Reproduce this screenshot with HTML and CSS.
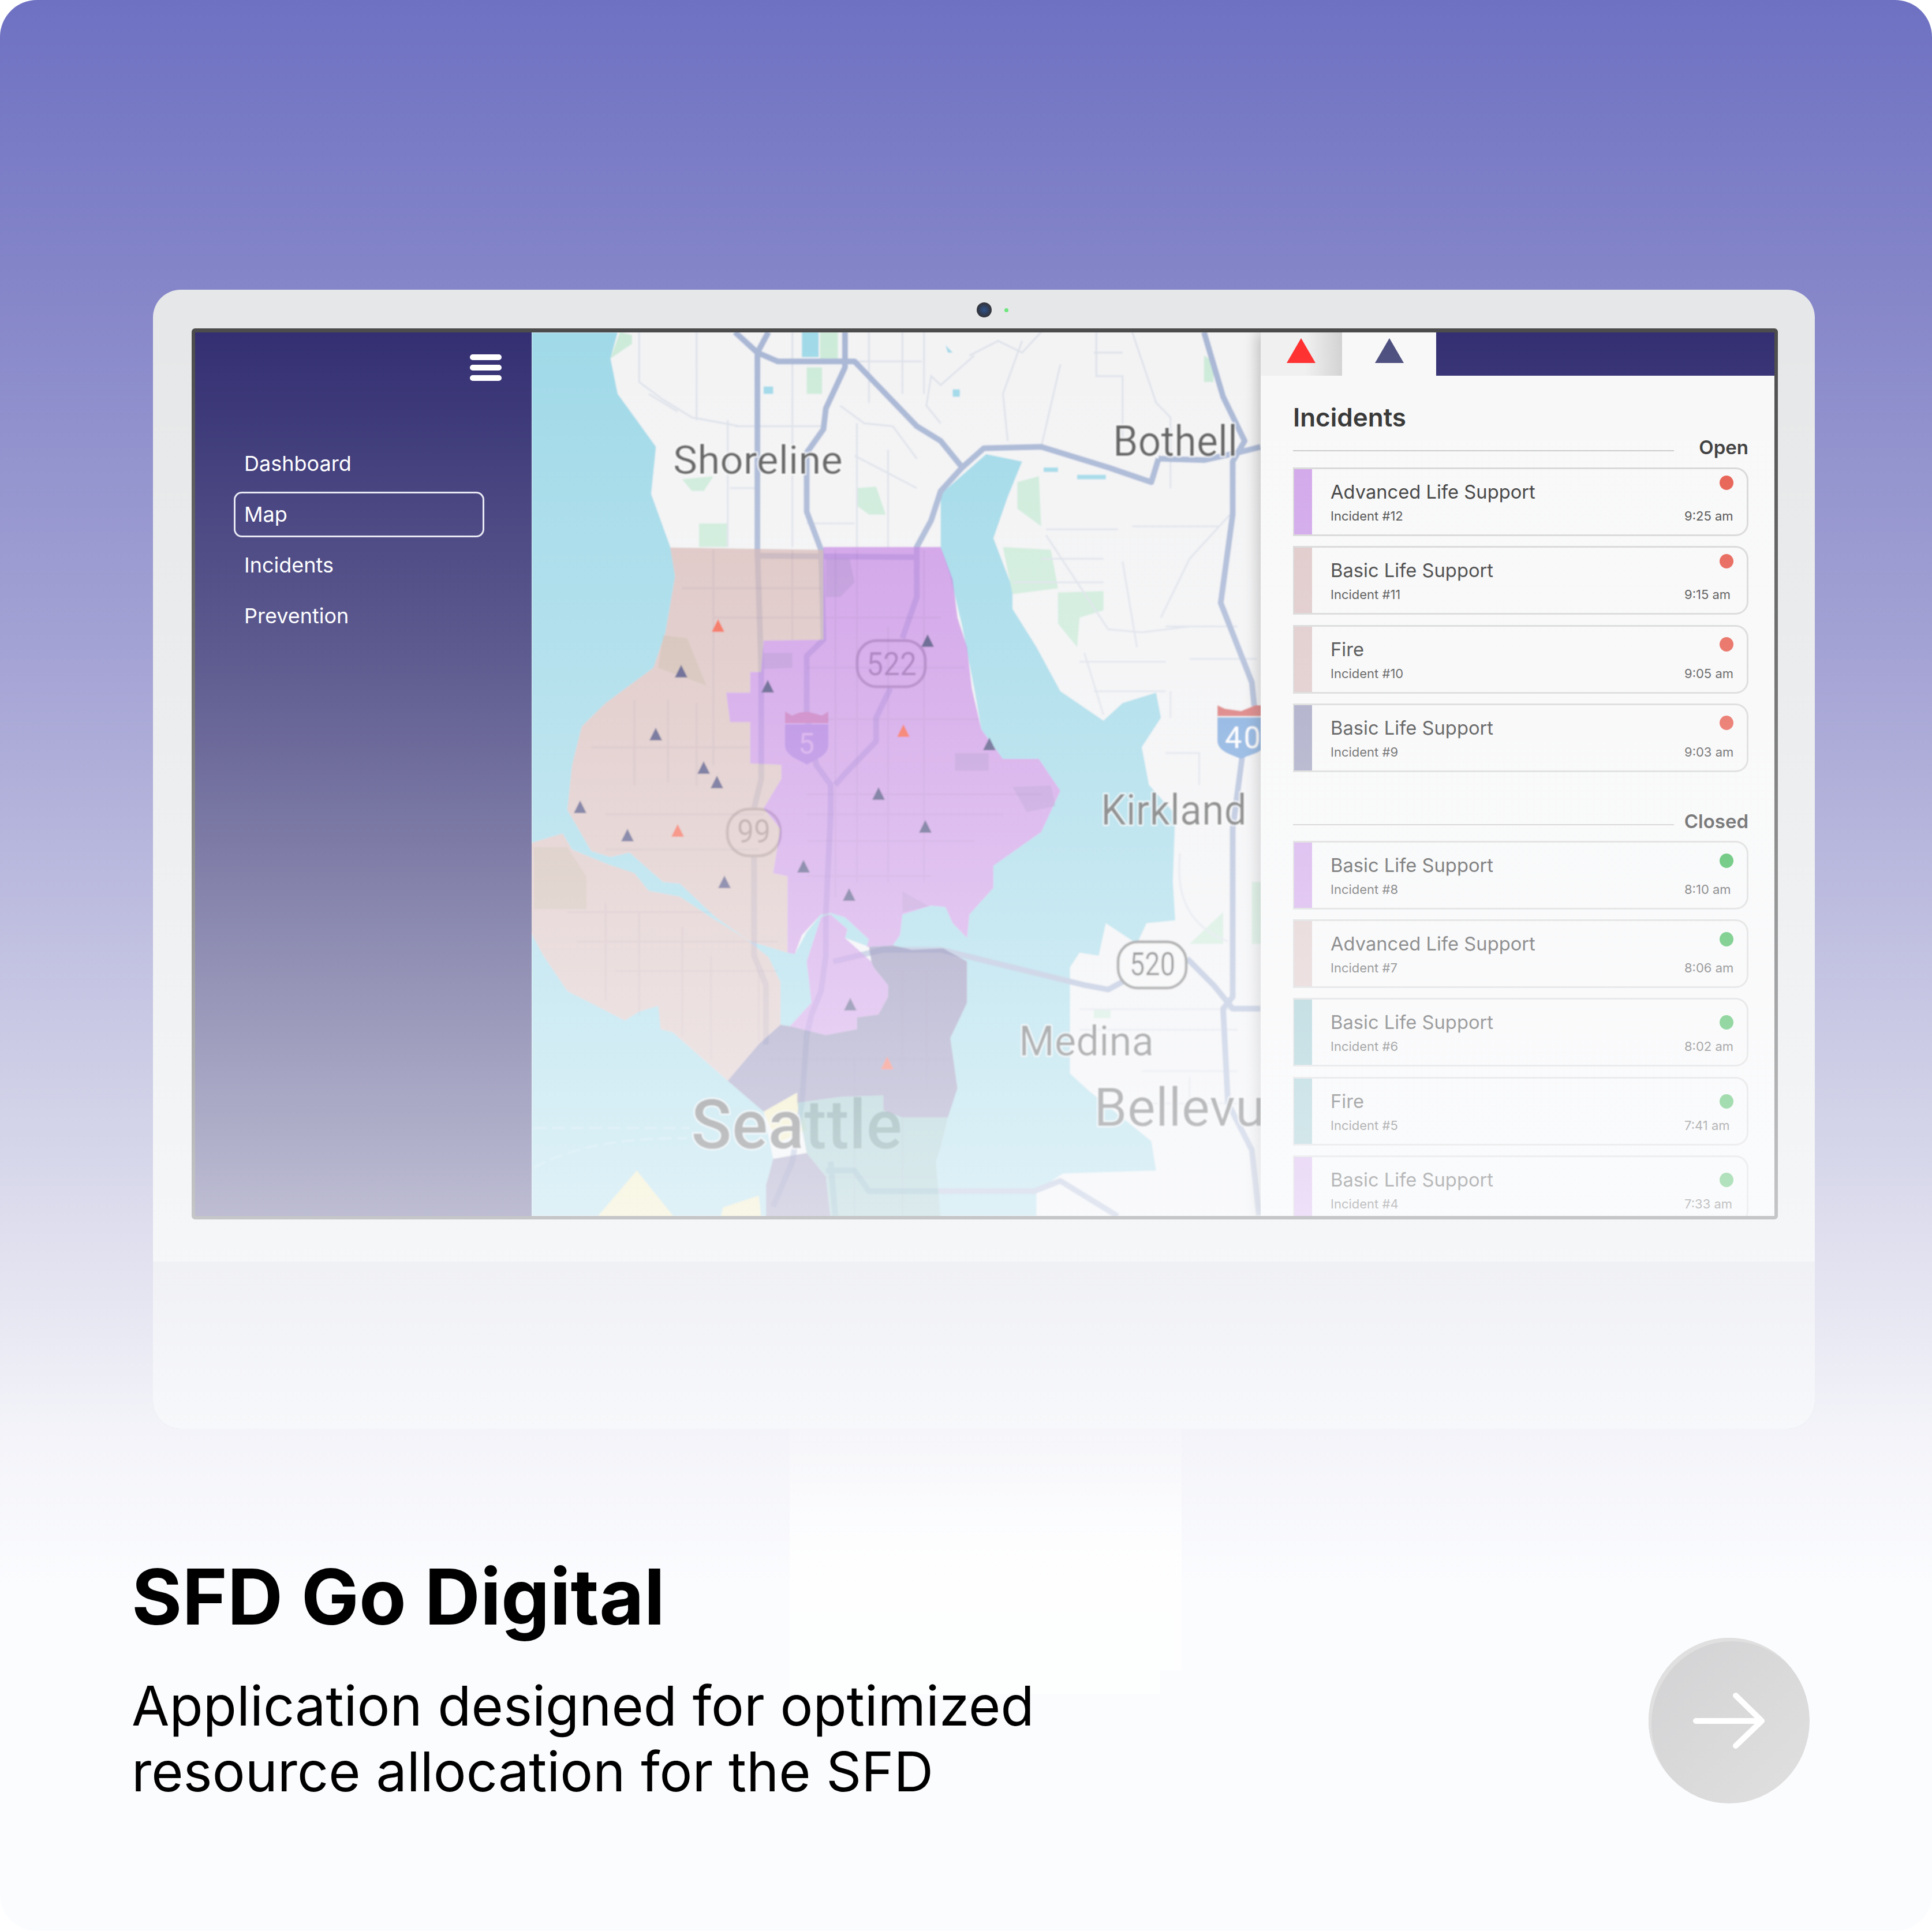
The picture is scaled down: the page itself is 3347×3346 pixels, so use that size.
FILE: index.html
```html
<!DOCTYPE html>
<html lang="en">
<head>
<meta charset="utf-8">
<title>SFD Go Digital</title>
<link rel="stylesheet" href="styles.css">
</head>
<body>
<main class="page">
  <section class="monitor">
    <div class="bezel-top"><span class="camera"><span class="led"></span></span></div>
    <div class="screen">
      <aside class="sidebar">
        <div class="burger"><span></span><span></span><span></span></div>
        <nav class="nav">
          <a class="nav-item">Dashboard</a>
          <a class="nav-item active">Map</a>
          <a class="nav-item">Incidents</a>
          <a class="nav-item">Prevention</a>
        </nav>
      </aside>
      <div class="map">
        <svg class="map-svg" viewBox="921 576 1263 1531" preserveAspectRatio="none" xmlns="http://www.w3.org/2000/svg">
          <defs><filter id="soft" x="0" y="0" width="1" height="1"><feGaussianBlur stdDeviation="0.9"/></filter></defs>
          <g filter="url(#soft)">
          <rect class="water" x="921" y="576" width="1263" height="1531"/>
          <g transform="translate(900 560) scale(.8292 .5102)">
            <path class="ferry" d="M30 2733H355M30 2868C120 2790 220 2768 350 2768"/>
            <path class="land" d="M210 0 190 120 205 240 245 330 285 420 275 580 315 760 325 860 305 1050 280 1170 180 1290 130 1370 110 1500 100 1653 150 1793 190 1813 230 1798 300 1898 335 1903 410 2018 480 2098 560 2138 575 2143 600 2068 630 2008 650 2003 680 2018 730 2093 725 2118 780 2113 795 2078 800 2008 860 1978 890 1983 905 2038 935 2088 940 2008 990 1918 990 1843 1090 1728 1130 1588 1085 1480 1010 1480 965 1380 950 1240 925 1030 900 860 880 760 880 580 975 445 1050 470 1020 590 990 730 1030 900 1030 970 1080 1100 1130 1250 1220 1350 1260 1290 1330 1255 1340 1340 1300 1440 1315 1568 1370 1668 1365 1898 1370 2028 1310 2038 1290 2108 1225 2038 1210 2148 1170 2138 1150 2188 1150 2548 1190 2608 1320 2778 1330 2878 1135 2888 1080 2948 1080 3040 1600 3040 1600 0Z"/>
            <path class="land" d="M0 1778 90 1733 110 1788 185 1838 240 1868 270 1928 335 1948 400 2018 470 2088 520 2153 545 2238 545 2383 565 2388 610 2308 600 2168 630 2018 650 2008 685 2058 680 2088 730 2118 780 2113 820 2128 885 2123 935 2168 935 2308 900 2428 915 2598 895 2698 880 2798 870 2848 880 3040 515 3040 515 2928 530 2838 510 2678 435 2573 320 2408 295 2398 290 2318 250 2338 220 2368 100 2268 50 2148 0 1998Z"/>
            <path class="yellow" d="M510 2678 580 2613 600 2738 540 2783ZM160 3040 245 2878 325 3040ZM420 3040 425 3003 500 2963 505 3040Z"/>
            <path class="green" d="M190 120 210 30 235 40 235 70ZM600 150H632V240H600ZM628 30H665V120H628ZM375 680H435V760H375ZM705 560 745 555 765 650H730L705 620ZM340 530 405 520 385 570 360 570ZM1010 760 1110 770 1125 900 1030 920ZM1125 915 1220 910 1220 975 1170 1000 1165 1100 1125 1020ZM1430 110 1450 130 1450 200 1430 200ZM1040 540 1085 520 1090 690 1040 630ZM1530 1898H1560V2108H1530ZM1400 2108 1470 2000V2108ZM1200 2328H1235V2360H1200Z"/>
            <path class="water" d="M590 30H625V115H590ZM1165 515H1225V530H1165ZM905 225H920V250H905ZM510 215H530V240H510ZM1095 490H1125V505H1095ZM890 75 905 100 895 100Z"/>
            <path class="minor" d="M250 30V200L300 260 360 320 460 350 640 350M370 30V330M435 330V760M570 30V760M705 340V760M770 430V760M730 30V270M845 30V240M800 30V240M700 130H840M1050 60 1010 240 1020 400M1130 140 1090 420M1205 30V180H1260V400M1100 700H1250M1030 880H1220M1100 720 1230 1040 1300 1050 1400 1030M1170 1150H1350M1350 1030H1500M1260 810 1290 1100M1090 800H1220M1490 640 1400 800 1340 1000M1200 1250H1350M1350 1460H1420V1568M1170 2330H1500M1170 2400H1500M1300 2540H1500M1300 2650H1500M1400 2560V2700M1380 1800C1370 1950 1400 2050 1480 2100M940 110 1000 60 1050 100 1090 30M950 110 880 210 860 180 850 280 880 340M1280 30 1330 270 1360 320V560M1200 100H1260M1280 690H1460M1180 1120 1220 1330M1400 1140H1540M1360 1250V1340M270 240 330 300M450 350 520 350M440 560 500 560M600 680H700M700 450 830 560M670 280 720 340 780 350 830 460"/>
            <path class="major" d="M450 30 497 100V770L505 1180V1548L490 1648V2148L515 2248V2450"/>
            <path class="major" d="M680 30V150L640 290 635 360 600 440V640L630 770 635 1075 600 1130V1330L620 1500 650 1568V1668L640 2008V2148L630 2268 610 2348 600 2418 590 2648 570 2848 530 3000"/>
            <path class="major" d="M520 30 497 100 540 130H700L830 350 880 400 925 490 970 425 1090 420 1230 490 1320 540 1335 460M1335 460 1430 465 1500 440 1548 420"/>
            <path class="major" d="M925 490 880 570 860 670 830 760V930L800 1070M775 1240 745 1340V1420L680 1530 660 1568"/>
            <path class="major" d="M497 790 830 795"/>
            <path class="major" d="M1430 30 1470 250 1515 400 1490 470V650L1465 950 1530 1220 1535 1300M1510 1470 1490 1718V2288L1470 2328 1480 2648 1530 2808 1545 3030"/>
            <path class="major" d="M655 2168 760 2128H880L1180 2248 1230 2263 1270 2228M1395 2158 1450 2248 1490 2328H1548"/>
            <path class="major" d="M640 2878H700L730 2948H1075L1130 2913 1250 3033M650 2848 660 3033"/>
          </g>
          <text class="place" x="1166" y="821" font-size="69" textLength="294" lengthAdjust="spacingAndGlyphs">Shoreline</text>
          <text class="place" x="1928" y="790" font-size="75" textLength="216" lengthAdjust="spacingAndGlyphs">Bothell</text>
          <text class="place" x="1907" y="1429" font-size="75" textLength="253" lengthAdjust="spacingAndGlyphs">Kirkland</text>
          <text class="place" x="1765" y="1829" font-size="72" textLength="234" lengthAdjust="spacingAndGlyphs">Medina</text>
          <text class="place" x="1895" y="1951" font-size="93" textLength="345" lengthAdjust="spacingAndGlyphs">Bellevue</text>
          <text class="place seattle" x="1197" y="1990" font-size="118" textLength="366" lengthAdjust="spacingAndGlyphs">Seattle</text>
          <path class="i-top" d="M1360 1233 1372 1240 1384 1235 1398 1233 1410 1236 1424 1240 1435 1233V1253H1360Z"/>
          <path class="i-five" d="M1360 1255H1435V1290C1435 1310 1412 1316 1398 1325 1384 1316 1360 1310 1360 1290Z"/>
          <text class="shield-num light" x="1397" y="1306" font-size="50" text-anchor="middle">5</text>
          <path class="i-top four" d="M2109 1222 2122 1228 2150 1232 2175 1222H2190V1241H2109Z"/>
          <path class="i-four" d="M2109 1243H2190V1290C2190 1305 2162 1308 2150 1315 2135 1308 2109 1303 2109 1283Z"/>
          <text class="shield-num light" x="2122" y="1296" font-size="52" textLength="62">40</text>
          <rect class="shield" x="1485" y="1110" width="118" height="80" rx="34"/>
          <text class="shield-num" x="1501" y="1170" font-size="55" textLength="87" lengthAdjust="spacingAndGlyphs">522</text>
          <rect class="shield" x="1260" y="1402" width="92" height="81" rx="38"/>
          <text class="shield-num" x="1277" y="1460" font-size="55" textLength="58" lengthAdjust="spacingAndGlyphs">99</text>
          <rect class="shield" x="1937" y="1632" width="118" height="80" rx="34"/>
          <text class="shield-num" x="1957" y="1690" font-size="55" textLength="79" lengthAdjust="spacingAndGlyphs">520</text>
          <g transform="translate(900 560) scale(.8292 .5102)">
            <path class="zone-pink" d="M315 762 635 770 635 1075 510 1078 505 1185 482 1185 482 1255 432 1255 440 1355 482 1355 482 1495 547 1500 547 1548 510 1648 545 1718 530 1868 560 1878 560 2138 480 2098 410 2018 335 1903 300 1898 230 1798 190 1813 150 1793 100 1653 110 1500 130 1370 180 1290 280 1170 305 1050 325 860Z"/>
            <path class="zone-pink" d="M0 1778 90 1733 110 1788 185 1838 240 1868 270 1928 335 1948 400 2018 470 2088 520 2153 545 2238 545 2383 500 2448 435 2573 320 2408 295 2398 290 2318 250 2338 220 2368 100 2268 50 2148 0 1998Z"/>
            <path class="olive" d="M30 1780 100 1780 140 1880 140 1990H30ZM300 1060 350 1070 390 1230 290 1170Z"/>
            <path class="zone-purple" d="M635 760H880L905 870 915 1000 935 1100 945 1240 965 1380 1010 1480H1085L1130 1588 1090 1728 990 1843V1918L940 2008 935 2088 905 2038 890 1983 860 1978 800 2008 795 2078 780 2113 725 2118 730 2093 680 2018 650 2003 630 2008 590 2078 575 2143 560 2138V1878L530 1868 545 1718 510 1648 547 1548V1500L482 1495V1355H440L432 1255H482V1185H505L510 1078 635 1075Z"/>
            <path class="zone-purple" d="M630 2018 650 2008 685 2058 680 2088 735 2168 740 2188 770 2248V2288L750 2348 705 2358V2398L640 2418 565 2388 610 2308 600 2168Z"/>
            <path class="patch" d="M640 800H690L700 880 670 930H640ZM510 1120H570V1170L510 1175ZM1030 1575 1110 1570 1120 1640 1060 1660ZM800 1930 855 1980 800 2000ZM910 1460H980V1520H910Z"/>
            <path class="zone-lav" d="M735 2168 730 2118 780 2113 820 2128 885 2123 935 2168V2308L900 2428 915 2598 895 2698H800L760 2673V2623L670 2628 580 2648V2613L510 2678 435 2573 500 2448 545 2383 565 2388 640 2418 705 2398V2358L750 2348 770 2288V2248L740 2188ZM530 2838 515 2928V3040H650L640 2898 600 2818Z"/>
            <path class="zone-teal" d="M580 2648 670 2628 760 2623V2673L800 2698H895L880 2798 870 2848 880 3040H650L640 2898 600 2818Z"/>
            <path class="zone-grid" d="M405 770V1500M240 1280V1570M310 1280V1560M370 1290V1570M150 1440H480M180 1668H510M180 1788H500M340 900H630M405 1000H630M570 770V1075M660 770V1950M705 770V1900M770 1030V1900M845 770V1900M640 1000H880M600 1170H930M640 1345H960M600 1600H1090M600 1668H1010M600 1758H950M600 1878H860M100 2000H400M180 1970V2300M250 2000V2350M340 2050V2420M400 2150V2500M500 2200V2440M120 2100H540M200 2200H540M520 2500H900M520 2600H900M700 2500V2620M800 2200V2550M850 2200V2600M700 2650V3040M800 2700V3040M600 2900H870"/>
          </g>
          <path class="mark-navy" d="M1607 1099l11 22h-22zM1180 1152l11 22h-22zM1330 1178l11 22h-22zM1136 1261l11 22h-22zM1714 1278l11 22h-22zM1219 1319l11 22h-22zM1242 1344l11 22h-22zM1522 1364l11 22h-22zM1005 1387l11 22h-22zM1087 1436l11 22h-22zM1603 1421l11 22h-22zM1392 1490l11 22h-22zM1255 1517l11 22h-22zM1471 1539l11 22h-22zM1473 1729l11 22h-22z"/>
          <path class="mark-red" d="M1244 1073l11 22h-22zM1565 1255l11 22h-22zM1174 1428l11 22h-22zM1537 1831l11 22h-22z"/>
          </g>
        </svg>
      </div>
      <div class="panel">
        <div class="tabs">
          <div class="tab">
            <svg class="tab-icon" viewBox="0 0 50 43"><path class="tab-red" d="M25 0 50 43H0Z"/></svg>
          </div>
          <div class="tab active">
            <svg class="tab-icon" viewBox="0 0 50 43"><path class="tab-navy" d="M25 0 50 43H0Z"/></svg>
          </div>
          <div class="tab-fill"></div>
        </div>
        <div class="panel-body">
          <h2 class="panel-title">Incidents</h2>
          <div class="head"><span class="rule"></span><span class="head-label">Open</span></div>
          <div class="list">
            <article class="card"><span class="strip purple"></span><div class="card-main"><h3>Advanced Life Support</h3><div class="meta"><span>Incident #12</span><time>9:25 am</time></div></div><span class="dot red d14"></span></article>
            <article class="card"><span class="strip pink"></span><div class="card-main"><h3>Basic Life Support</h3><div class="meta"><span>Incident #11</span><time>9:15 am</time></div></div><span class="dot red d14"></span></article>
            <article class="card"><span class="strip pink"></span><div class="card-main"><h3>Fire</h3><div class="meta"><span>Incident #10</span><time>9:05 am</time></div></div><span class="dot red d21"></span></article>
            <article class="card"><span class="strip lav"></span><div class="card-main"><h3>Basic Life Support</h3><div class="meta"><span>Incident #9</span><time>9:03 am</time></div></div><span class="dot red d21"></span></article>
          </div>
          <div class="head closed"><span class="rule"></span><span class="head-label">Closed</span></div>
          <div class="list">
            <article class="card"><span class="strip purple"></span><div class="card-main"><h3>Basic Life Support</h3><div class="meta"><span>Incident #8</span><time>8:10 am</time></div></div><span class="dot green d22"></span></article>
            <article class="card"><span class="strip pink"></span><div class="card-main"><h3>Advanced Life Support</h3><div class="meta"><span>Incident #7</span><time>8:06 am</time></div></div><span class="dot green d22"></span></article>
            <article class="card"><span class="strip teal"></span><div class="card-main"><h3>Basic Life Support</h3><div class="meta"><span>Incident #6</span><time>8:02 am</time></div></div><span class="dot green d30"></span></article>
            <article class="card"><span class="strip teal"></span><div class="card-main"><h3>Fire</h3><div class="meta"><span>Incident #5</span><time>7:41 am</time></div></div><span class="dot green d30"></span></article>
            <article class="card"><span class="strip purple"></span><div class="card-main"><h3>Basic Life Support</h3><div class="meta"><span>Incident #4</span><time>7:33 am</time></div></div><span class="dot green d30"></span></article>
          </div>
        </div>
      </div>
    </div>
    <div class="chin"></div>
    <div class="stand"><div class="neck"></div><div class="foot"></div></div>
  </section>
  <section class="caption">
    <div class="caption-text">
      <h1>SFD Go Digital</h1>
      <p>Application designed for optimized<br>resource allocation for the SFD</p>
    </div>
    <div class="next">
      <svg class="next-arrow" viewBox="0 0 279 287"><path d="M82 144H196M151 100 196 144 151 187"/></svg>
    </div>
  </section>
</main>
</body>
</html>
```

FILE: styles.css
```css
* { box-sizing: border-box; }
html, body { margin: 0; padding: 0; background: #fff; }
body { font-family: "Inter", "Liberation Sans", sans-serif; }
.page {
  width: 3347px; height: 3346px; padding-top: 502px; border-radius: 64px; overflow: hidden;
  background: linear-gradient(180deg, #6e71c2 0, #8384c8 460px, #a5a4d5 1160px, #d6d6ea 2000px, #f3f3f9 2476px, #fbfcfe 2750px);
}
.monitor {
  position: relative; width: 2879px; height: 1974px; margin-left: 265px;
  background: #e6e7e8; border-radius: 48px; display: flex; flex-direction: column;
}
.monitor::after {
  content: ""; position: absolute; inset: 0; border-radius: 48px; pointer-events: none;
  background: linear-gradient(180deg, rgba(251,252,254,0) 74px, rgba(251,252,254,.225) 658px, rgba(251,252,254,.69) 1605px, rgba(251,252,254,.9) 1974px);
}
.bezel-top { height: 67px; display: flex; justify-content: center; align-items: center; flex: none; }
.camera {
  position: relative; width: 26px; height: 26px; border-radius: 50%; margin-top: 2px;
  background: radial-gradient(circle, #2f5288 0, #2f4468 30%, #33363f 62%);
}
.led { position: absolute; left: 48px; top: 10px; width: 7px; height: 7px; border-radius: 50%; background: #6fe67f; }
.screen {
  margin-left: 67px; width: 2748px; height: 1544px; flex: none; display: flex;
  border: solid #4c4c4c; border-width: 7px 6px 6px 6px; border-radius: 6px; overflow: hidden; background: #fff;
}
.chin {
  margin-top: 73px; flex: 1; background: #d1d1db; border-radius: 0 0 48px 48px;
}
.sidebar { width: 583px; flex: none; background: #332f72; padding: 38px 52px 0 67px; display: flex; flex-direction: column; }
.burger { align-self: flex-end; width: 55px; display: flex; flex-direction: column; gap: 8px; }
.burger span { height: 10px; border-radius: 5px; background: #fff; }
.nav { margin: 104px 30px 0 0; display: flex; flex-direction: column; gap: 9px; }
.nav-item {
  height: 79px; line-height: 73px; border: 3px solid transparent; border-radius: 14px;
  padding-left: 15px; color: #fff; font-size: 36px;
}
.nav-item.active { border-color: #e6e6f2; }
.map { flex: 1; min-width: 0; }
.map-svg { display: block; width: 100%; height: 100%; }
.water { fill: #a0d9e8; }
.land { fill: #f3f3f4; }
.yellow { fill: #f3ecb5; }
.green { fill: #cdebd9; }
.ferry { fill: none; stroke: #b9e2ee; stroke-width: 3; stroke-dasharray: 22 10; vector-effect: non-scaling-stroke; }
.minor { fill: none; stroke: #dde1e9; stroke-width: 3; vector-effect: non-scaling-stroke; }
.major { fill: none; stroke: #a9b7d5; stroke-width: 10; stroke-linejoin: round; vector-effect: non-scaling-stroke; }
.place {
  font-family: "Roboto", "Liberation Sans", sans-serif; fill: #5a5a5a;
  stroke: #fff; stroke-width: 5px; stroke-opacity: .75; paint-order: stroke; stroke-linejoin: round;
}
.seattle { font-weight: 500; }
.shield { fill: #f6f6f6; stroke: #777; stroke-width: 5; }
.shield-num { font-family: "Roboto", "Liberation Sans", sans-serif; fill: #4a4a4a; }
.shield-num.light { fill: #fff; }
.i-top { fill: #d76a6a; }
.i-five { fill: #8e8ae0; }
.i-four { fill: #78a5db; }
.zone-pink { fill: #d2aeab; opacity: .7; }
.zone-purple { fill: #be75df; opacity: .7; }
.zone-lav { fill: #635b99; opacity: .7; }
.zone-teal { fill: #54a4a9; opacity: .6; }
.zone-grid { fill: none; stroke: rgba(120,90,150,.1); stroke-width: 3; vector-effect: non-scaling-stroke; }
.olive { fill: #a09a70; opacity: .2; }
.patch { fill: #8f7ab5; opacity: .28; }
.mark-navy { fill: #4c4c7e; }
.mark-red { fill: #f4604a; }
.panel {
  width: 890px; flex: none; display: flex; flex-direction: column; position: relative;
  background: #f8f8f8; box-shadow: -6px 0 22px rgba(0,0,0,.22);
}
.tabs { height: 75px; flex: none; display: flex; }
.tab { width: 141px; display: flex; justify-content: center; padding: 10px 2px 0 0; background: linear-gradient(90deg, #f0f0f0 55%, #d2d2d2); }
.tab.active { width: 163px; padding-right: 0; background: #f8f8f8; border-radius: 0 14px 0 0; }
.tab-fill { flex: 1; background: #332f72; }
.tab-icon { width: 50px; height: 43px; display: block; }
.tab-red { fill: #ff2f2f; }
.tab-navy { fill: #4c4e7e; }
.panel-body { flex: 1; min-height: 0; overflow: hidden; padding: 50px 45px 0 56px; }
.panel-title { margin: 0 0 14px; font-size: 44px; line-height: 44px; font-weight: 600; color: #2e2e2e; }
.head { display: flex; justify-content: space-between; align-items: flex-end; height: 32px; margin-bottom: 19px; }
.head.closed { margin-top: 69px; margin-bottom: 18px; }
.rule { width: 660px; height: 2px; margin-bottom: 9px; background: #c8c8c8; }
.head-label { font-size: 33px; line-height: 32px; font-weight: 600; color: #333; }
.list { display: flex; flex-direction: column; gap: 17.3px; }
.card {
  position: relative; flex: none; display: flex; height: 119px; overflow: hidden;
  border: 3px solid #d6d6d6; border-left-width: 2px; border-radius: 0 22px 22px 0; background: #f8f8f8;
}
.strip { width: 31px; flex: none; }
.strip.purple { background: #cfa2e9; }
.strip.pink { background: #dec6c6; }
.strip.lav { background: #9e9ebe; }
.strip.teal { background: #8fc3ca; }
.card-main { flex: 1; min-width: 0; padding: 19px 0 0 32px; }
.card-main h3 { margin: 0 0 8px; font-size: 32.7px; line-height: 40px; font-weight: 400; color: #333; }
.meta { display: flex; justify-content: space-between; font-size: 22px; line-height: 28px; color: #444; }
.meta time { width: 108px; }
.dot { position: absolute; right: 23px; width: 24px; height: 25px; border-radius: 50%; }
.dot.red { background: #e65749; }
.dot.green { background: #23ae3e; }
.d14 { top: 11px; }
.d21 { top: 18px; }
.d22 { top: 19px; }
.d30 { top: 27px; }
.stand { position: absolute; top: 100%; left: 1103px; width: 679px; opacity: .7; }
.neck { height: 419px; background: linear-gradient(180deg, rgba(255,255,255,.2), #fff 50%); }
.foot { width: 642px; height: 40px; background: #fff; }
.caption {
  position: relative; display: flex; justify-content: space-between; align-items: flex-start;
  margin-top: 221px; padding: 0 212px 0 228px;
}
.caption h1 { margin: 0; font-size: 133.5px; line-height: 140px; font-weight: 700; color: #000; }
.caption p { margin: 62px 0 0; font-size: 95px; line-height: 114px; font-weight: 400; color: #000; }
.next {
  width: 279px; height: 287px; margin-top: 141px; border-radius: 50%;
  background: linear-gradient(135deg, #d2d2d4, #e0e0e0); box-shadow: inset 5px 6px 0 #e0e0e0;
}
.next-arrow { display: block; width: 100%; height: 100%; }
.next-arrow path { fill: none; stroke: #fff; stroke-width: 10; stroke-linecap: round; stroke-linejoin: round; }
```
